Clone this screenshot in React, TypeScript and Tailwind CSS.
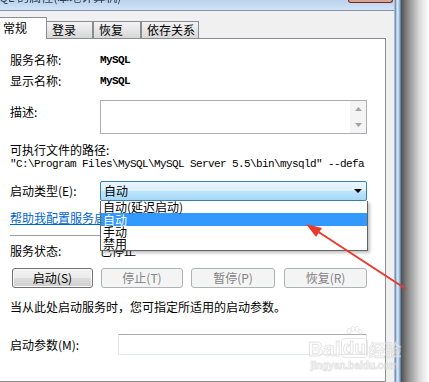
const OPTIONS = ["自动(延迟启动)", "自动", "手动", "禁用"]

function TitleBar() {
  return (
    <div className="flex h-[11px] shrink-0 overflow-hidden border-b border-[#8093aa] bg-[linear-gradient(to_bottom,#b9d2ed,#d2e3f5)]">
      <span className="-mt-[9px] ml-[-24px] whitespace-nowrap text-[12px] leading-[12px] text-[#2f3d52] blur-[0.7px]">
        MySQL 的属性(本地计算机)
      </span>
      <div className="ml-auto mr-[1px] h-[3px] w-[45px] rounded-b-[3px] border border-t-0 border-[#6b2e28] bg-[#d9a394]" />
    </div>
  )
}

function Tabs() {
  return (
    <div className="flex h-[21px] items-end">
      <div className="relative z-10 -mb-px flex h-[22px] w-[47px] items-start border-t border-r border-[#898c95] bg-white pl-[3px] pt-[3px] leading-[14px]">
        常规
      </div>
      {[
        ["登录", "w-[46px]"],
        ["恢复", "w-[48px] border-l"],
        ["依存关系", "w-[58px] border-l"],
      ].map(([label, w]) => (
        <div
          key={label}
          className={`flex h-[17px] items-center border-t border-r border-[#898c95] bg-[linear-gradient(to_bottom,#f3f3f3,#e6e6e6_50%,#d7d7d7)] pl-[5px] leading-[14px] ${w}`}
        >
          {label}
        </div>
      ))}
    </div>
  )
}

function Button({ label, enabled, className }: { label: string; enabled?: boolean; className: string }) {
  return (
    <div
      className={`flex h-[20px] items-center justify-center rounded-[3px] border leading-[14px] ${
        enabled
          ? "border-[#707070] bg-[linear-gradient(to_bottom,#f2f2f2_0%,#ebebeb_50%,#dddddd_50%,#cfcfcf_100%)] shadow-[inset_0_0_0_1px_#fbfbfb] text-black"
          : "border-[#adb2b5] bg-[#f4f4f4] text-[#838383]"
      } ${className}`}
    >
      {label}
    </div>
  )
}

function Panel() {
  return (
    <div className="flex h-[344px] w-[386px] flex-col border-t border-r border-b border-[#898c95] bg-white pl-[10px] leading-[16px]">
      <div className="mt-[13px] flex h-4 items-center">
        <span className="w-[90px]">服务名称:</span>
        <span className="font-['Liberation_Mono',monospace] text-[11px] font-bold tracking-[-0.6px]">MySQL</span>
      </div>
      <div className="mt-[5px] flex h-4 items-center">
        <span className="w-[90px]">显示名称:</span>
        <span className="font-['Liberation_Mono',monospace] text-[11px] font-bold tracking-[-0.6px]">MySQL</span>
      </div>
      <div className="mt-[11px] flex items-start">
        <span className="mt-[4px] w-[90px]">描述:</span>
        <div className="flex h-[34px] w-[267px] justify-end border border-[#abadb3] bg-white">
          <div className="flex w-[16px] flex-col items-center justify-between bg-[#f4f4f4] py-[6px]">
            <svg width="7" height="4" viewBox="0 0 7 4">
              <path d="M0 4 L3.5 0 L7 4 Z" fill="#a3a3a3" />
            </svg>
            <svg width="7" height="4" viewBox="0 0 7 4">
              <path d="M0 0 L3.5 4 L7 0 Z" fill="#a3a3a3" />
            </svg>
          </div>
        </div>
      </div>
      <div className="mt-[9px] flex h-[14px] items-center leading-[14px]">可执行文件的路径:</div>
      <div className="flex h-[14px] w-[356px] items-center overflow-hidden whitespace-nowrap font-['Liberation_Mono',monospace] text-[11px] leading-[14px] tracking-[-0.6px]">
        "C:\Program Files\MySQL\MySQL Server 5.5\bin\mysqld" --defa
      </div>
      <div className="mt-[10px] flex h-[20px] items-center">
        <span className="w-[90px]">启动类型(E):</span>
        <div className="relative z-20 flex h-[20px] w-[267px] items-center rounded-[2px] border border-[#3c7fb1] bg-[linear-gradient(to_bottom,#eaf6fd_0%,#d9f0fc_50%,#bee6fd_50%,#a7d9f5_100%)] pl-[3px]">
          <span>自动</span>
          <svg className="ml-auto mr-[4px]" width="8" height="4" viewBox="0 0 8 4">
            <path d="M0 0 L8 0 L4 4 Z" fill="#000" />
          </svg>
          <div className="absolute left-[-1px] top-[19px] w-[268px] border-x border-b border-[#646464] bg-white leading-[12px] shadow-[2px_2px_3px_rgba(0,0,0,0.25)]">
            {OPTIONS.map((o, i) => (
              <div
                key={o}
                className={`flex items-center pl-[2px] ${
                  i === 1 ? "h-[13px] bg-[#3399ff] text-white" : "h-[12px] text-black"
                }`}
              >
                {o}
              </div>
            ))}
          </div>
        </div>
      </div>
      <div className="mt-[9px] flex h-4 items-center">
        <span className="text-[#0066cc] underline">帮助我配置服务启动选项。</span>
      </div>
      <div className="mt-[9px] h-px w-[356px] bg-[#a0a0a0]" />
      <div className="mt-[7px] flex h-4 items-center">
        <span className="w-[90px]">服务状态:</span>
        <span>已停止</span>
      </div>
      <div className="mt-[9px] flex">
        <Button label="启动(S)" enabled className="ml-[2px] w-[81px]" />
        <Button label="停止(T)" className="ml-[8px] w-[82px]" />
        <Button label="暂停(P)" className="ml-[8px] w-[84px]" />
        <Button label="恢复(R)" className="ml-[9px] w-[83px]" />
      </div>
      <div className="mt-[11px] flex h-4 items-center">当从此处启动服务时，您可指定所适用的启动参数。</div>
      <div className="mt-[19px] flex h-[21px] items-center">
        <span className="w-[108px]">启动参数(M):</span>
        <div className="h-[21px] w-[249px] border border-[#e2e3ea] border-t-[#abadb3] border-b-[#e3e9ef] bg-white" />
      </div>
    </div>
  )
}

function Arrow() {
  return (
    <svg className="pointer-events-none absolute inset-0 z-30" width="429" height="382" viewBox="0 0 429 382">
      <line x1="317" y1="231" x2="406" y2="289" stroke="#e63b2e" strokeWidth="2" />
      <polygon points="306,224 322,228 316,237" fill="#e63b2e" />
    </svg>
  )
}

function Watermark() {
  return (
    <div className="pointer-events-none absolute left-[308px] top-[326px] z-30 flex flex-col items-center font-['Liberation_Sans',sans-serif] font-bold text-white opacity-60 [-webkit-text-stroke:1px_#d4d4d4]">
      <div className="flex items-end leading-[18px]">
        <span className="text-[21px]">Bai</span>
        <span className="flex flex-col items-center">
          <svg width="18" height="12" viewBox="0 0 18 12">
            <g fill="white" stroke="#d4d4d4" strokeWidth="1">
              <ellipse cx="4" cy="5" rx="2" ry="2.5" />
              <ellipse cx="8" cy="3" rx="2" ry="2.5" />
              <ellipse cx="12" cy="3" rx="2" ry="2.5" />
              <ellipse cx="15.5" cy="6" rx="1.8" ry="2.2" />
            </g>
          </svg>
          <span className="rounded-[4px] border border-[#d4d4d4] px-[1px] text-[19px]">du</span>
        </span>
        <span className="ml-[1px] font-['Noto_Sans_CJK_SC',sans-serif] text-[16px]">经验</span>
      </div>
      <div className="mt-[3px] text-[10px] leading-[10px]">jingyan.baidu.com</div>
    </div>
  )
}

export default function App() {
  return (
    <div className="relative flex h-[382px] w-[429px] overflow-hidden bg-white font-['Noto_Sans_CJK_SC',sans-serif] text-[12px] text-black">
      <div className="flex w-[394px] shrink-0 flex-col">
        <TitleBar />
        <div className="flex flex-1 flex-col bg-[#f0f0f0] pt-[6px]">
          <Tabs />
          <Panel />
        </div>
      </div>
      <div className="w-[7px] shrink-0 bg-[linear-gradient(to_right,#c9d3de,#6f8fb8_20%,#dcebfa_45%,#b3cfea_70%,#4f6f96)]" />
      <div className="flex-1 bg-[linear-gradient(to_right,#505050,#8c8c8c_25%,#d8d8d8_65%,#ffffff)]" />
      <Arrow />
      <Watermark />
    </div>
  )
}
